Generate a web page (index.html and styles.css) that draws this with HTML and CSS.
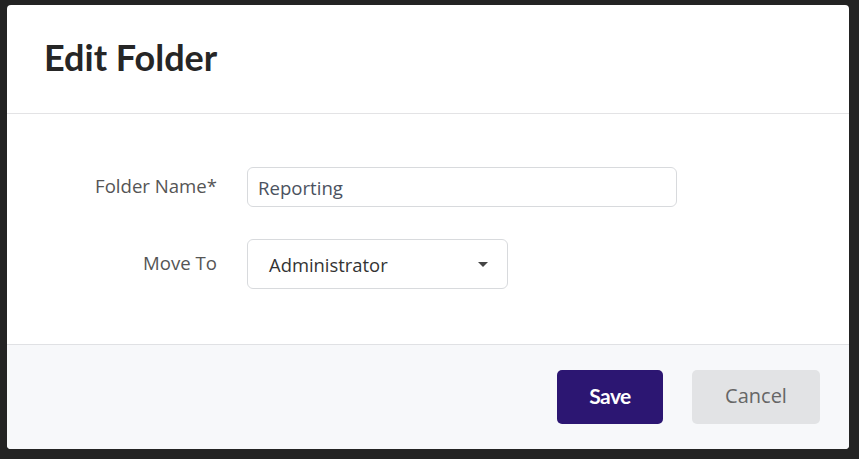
FILE: index.html
```html
<!DOCTYPE html>
<html lang="en">
<head>
<meta charset="utf-8">
<title>Edit Folder</title>
<link rel="stylesheet" href="styles.css">
</head>
<body>
<div class="dialog">
  <header class="dialog-header">
    <h1 class="dialog-title">Edit Folder</h1>
  </header>
  <main class="dialog-body">
    <div class="form-grid">
      <label class="field-label" for="folder-name">Folder Name*</label>
      <div class="field">
        <input id="folder-name" class="text-input" type="text" value="Reporting">
      </div>
      <span class="field-label">Move To</span>
      <div class="field">
        <div class="select-box">
          <span class="select-value">Administrator</span>
          <svg class="caret" width="10" height="5" viewBox="0 0 10 5"><path d="M0 0 H10 L5 5 Z" fill="#444"/></svg>
        </div>
      </div>
    </div>
  </main>
  <footer class="dialog-footer">
    <button class="btn btn-primary" type="button">Save</button>
    <button class="btn btn-secondary" type="button">Cancel</button>
  </footer>
</div>
</body>
</html>
```
FILE: styles.css
```css
html, body {
  margin: 0;
  padding: 0;
}
body {
  background: #232323;
  width: 859px;
  height: 459px;
  overflow: hidden;
  font-family: "Open Sans", "Liberation Sans", sans-serif;
}
.dialog {
  margin: 5px 10px 10px 7px;
  width: 842px;
  height: 444px;
  background: #ffffff;
  border-radius: 4px;
  overflow: hidden;
  display: flex;
  flex-direction: column;
}
.dialog-header {
  padding: 30px 36px 34px 37px;
  border-bottom: 1px solid #e3e3e5;
}
.dialog-title {
  margin: 0;
  font-family: Lato, "Open Sans", sans-serif;
  font-weight: 700;
  font-size: 36px;
  line-height: 44px;
  color: #262626;
}
.dialog-body {
  padding: 53px 40px 0;
  flex: 1;
}
.form-grid {
  display: grid;
  grid-template-columns: 170px auto;
  column-gap: 30px;
  row-gap: 32px;
  align-items: center;
  justify-items: start;
}
.field-label {
  justify-self: end;
  font-size: 18.6px;
  color: #555555;
  line-height: 24px;
  position: relative;
  top: -1px;
}
.text-input {
  box-sizing: border-box;
  width: 430px;
  height: 40px;
  margin: 0;
  padding: 0 9px 0 10px;
  border: 1px solid #d8dadd;
  border-radius: 6px;
  font-family: "Open Sans", "Liberation Sans", sans-serif;
  font-size: 18.6px;
  color: #4b5260;
  background: #fff;
  outline: none;
}
.select-box {
  box-sizing: border-box;
  width: 261px;
  height: 50px;
  padding: 0 19px 0 21px;
  border: 1px solid #d8dadd;
  border-radius: 6px;
  display: flex;
  align-items: center;
  justify-content: space-between;
}
.select-value {
  font-size: 18.4px;
  color: #333333;
}
.caret {
  display: block;
}
.dialog-footer {
  height: 105px;
  box-sizing: border-box;
  border-top: 1px solid #e0e1e4;
  background: #f7f8fa;
  padding: 25px 29px 0 0;
  display: flex;
  justify-content: flex-end;
  align-items: flex-start;
  gap: 29px;
}
.btn {
  height: 54px;
  border: none;
  border-radius: 5px;
  margin: 0;
  padding: 0 0 4px;
  cursor: pointer;
}
.btn-primary {
  width: 106px;
  background: #2c1672;
  color: #ffffff;
  font-family: Lato, "Open Sans", sans-serif;
  font-weight: 700;
  font-size: 21px;
  letter-spacing: -0.6px;
}
.btn-secondary {
  width: 128px;
  background: #e2e3e5;
  color: #666666;
  font-family: "Open Sans", "Liberation Sans", sans-serif;
  font-size: 20px;
}
```
